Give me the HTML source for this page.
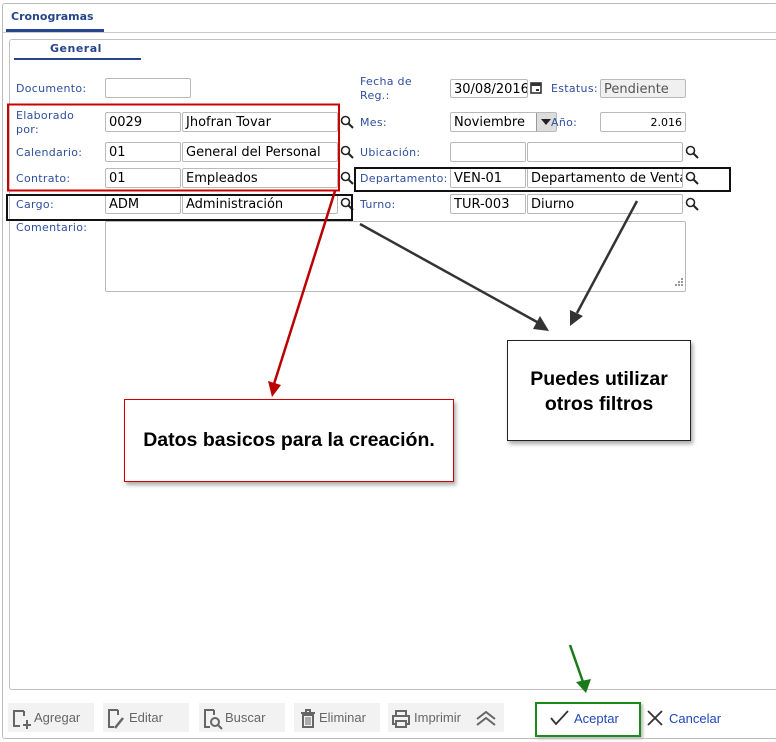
<!DOCTYPE html>
<html><head><meta charset="utf-8"><style>
*{box-sizing:border-box}
body{margin:0;width:776px;height:742px;background:#fff;position:relative;overflow:hidden;font-family:"DejaVu Sans","Liberation Sans",sans-serif}
.a{position:absolute}
.lbl{position:absolute;font-size:11px;color:#2e4f9c;line-height:14px;letter-spacing:.3px}
.in{position:absolute;border:1px solid #b9b9b9;border-radius:2px;height:20px;font-size:13px;line-height:20px;padding-left:3px;color:#000;background:#fff;white-space:nowrap;overflow:hidden}
.btn{position:absolute;top:703px;height:29px;background:#f2f2f2;font-family:"Liberation Sans",sans-serif;font-size:13px;color:#666;line-height:29px}
</style></head><body>
<div class="a" style="left:2px;top:3px;right:-2px;bottom:3px;border:1px solid #bcbcbc;border-radius:3px"></div>
<div class="a" style="left:11px;top:10px;font-size:11px;font-weight:bold;color:#27458c">Cronogramas</div>
<div class="a" style="left:6px;top:29px;width:98px;height:3px;background:#27458c"></div>
<div class="a" style="left:3px;top:32px;right:0;border-top:1px solid #c8c8c8"></div>
<div class="a" style="left:9px;top:39px;width:780px;height:651px;border:1px solid #c0c0c0;border-radius:3px"></div>
<div class="a" style="left:50px;top:42px;font-size:11px;font-weight:bold;color:#27458c;letter-spacing:.5px">General</div>
<div class="a" style="left:14px;top:58px;width:127px;height:2px;background:#27458c"></div>

<div class="lbl" style="left:16px;top:82px">Documento:</div>
<div class="in" style="left:105px;top:78px;width:86px"></div>
<div class="lbl" style="left:16px;top:109px">Elaborado<br>por:</div>
<div class="in" style="left:105px;top:112px;width:76px">0029</div>
<div class="in" style="left:182px;top:112px;width:156px">Jhofran Tovar</div>
<div class="lbl" style="left:16px;top:146px">Calendario:</div>
<div class="in" style="left:105px;top:142px;width:76px">01</div>
<div class="in" style="left:182px;top:142px;width:156px">General del Personal</div>
<div class="lbl" style="left:16px;top:172px">Contrato:</div>
<div class="in" style="left:105px;top:168px;width:76px">01</div>
<div class="in" style="left:182px;top:168px;width:156px">Empleados</div>
<div class="lbl" style="left:16px;top:198px">Cargo:</div>
<div class="in" style="left:105px;top:194px;width:76px">ADM</div>
<div class="in" style="left:182px;top:194px;width:156px">Administración</div>
<div class="lbl" style="left:16px;top:221px">Comentario:</div>
<div class="in" style="left:105px;top:221px;width:581px;height:71px"></div>

<div class="lbl" style="left:360px;top:75px">Fecha de<br>Reg.:</div>
<div class="in" style="left:450px;top:79px;width:78px;height:19px;line-height:19px">30/08/2016</div>
<svg class="a" style="left:530px;top:81px" width="12" height="13" viewBox="0 0 12 13"><rect x="1" y="2" width="10" height="10" fill="none" stroke="#333" stroke-width="1.6"/><rect x="1" y="2" width="10" height="3" fill="#333"/><rect x="6" y="8" width="3" height="2" fill="#333"/></svg>
<div class="lbl" style="left:551px;top:82px">Estatus:</div>
<div class="in" style="left:600px;top:79px;width:86px;height:19px;line-height:19px;background:#f0f0f0;color:#555">Pendiente</div>
<div class="lbl" style="left:360px;top:116px">Mes:</div>
<div class="in" style="left:450px;top:112px;width:107px">Noviembre</div>
<div class="a" style="left:536px;top:113px;width:20px;height:18px;background:#ddd;border-left:1px solid #999"></div>
<div class="a" style="left:541px;top:119px;width:0;height:0;border-left:5px solid transparent;border-right:5px solid transparent;border-top:6px solid #222"></div>
<div class="lbl" style="left:551px;top:116px">Año:</div>
<div class="in" style="left:600px;top:112px;width:86px;text-align:right;padding-right:3px;font-size:11px">2.016</div>
<div class="lbl" style="left:360px;top:146px">Ubicación:</div>
<div class="in" style="left:450px;top:142px;width:76px"></div>
<div class="in" style="left:527px;top:142px;width:156px"></div>
<div class="lbl" style="left:360px;top:172px">Departamento:</div>
<div class="in" style="left:450px;top:168px;width:76px">VEN-01</div>
<div class="in" style="left:527px;top:168px;width:156px">Departamento de Ventas</div>
<div class="lbl" style="left:360px;top:198px">Turno:</div>
<div class="in" style="left:450px;top:194px;width:76px">TUR-003</div>
<div class="in" style="left:527px;top:194px;width:156px">Diurno</div>

<svg class="a" style="left:0;top:0" width="776" height="742">
<defs><symbol id="lp" viewBox="0 0 14 14"><circle cx="5.5" cy="5.5" r="4" fill="none" stroke="#222" stroke-width="1.6"/><line x1="8.5" y1="8.5" x2="13" y2="13" stroke="#222" stroke-width="2"/></symbol></defs>
<use href="#lp" x="340" y="115" width="14" height="14"/>
<use href="#lp" x="340" y="145" width="14" height="14"/>
<use href="#lp" x="340" y="171" width="14" height="14"/>
<use href="#lp" x="340" y="197" width="14" height="14"/>
<use href="#lp" x="685" y="145" width="14" height="14"/>
<use href="#lp" x="685" y="171" width="14" height="14"/>
<use href="#lp" x="685" y="197" width="14" height="14"/>
<g fill="#999"><rect x="681" y="278" width="2" height="2"/><rect x="678" y="284" width="2" height="2"/><rect x="681" y="284" width="2" height="2"/><rect x="681" y="281" width="2" height="2"/><rect x="678" y="281" width="2" height="2"/><rect x="675" y="284" width="2" height="2"/></g>
<rect x="8" y="104.5" width="331" height="86" fill="none" stroke="#c00" stroke-width="2"/>
<rect x="7" y="195" width="345" height="25" fill="none" stroke="#111" stroke-width="2"/>
<rect x="355" y="168" width="375" height="23" fill="none" stroke="#111" stroke-width="2"/>
<line x1="335" y1="191" x2="274" y2="384" stroke="#b00" stroke-width="2.5"/>
<polygon points="268,381 281,385 272,397" fill="#b00"/>
<line x1="360" y1="224" x2="537" y2="322" stroke="#333" stroke-width="2.5"/>
<polygon points="533,329 540,316 549,331" fill="#333"/>
<line x1="637" y1="201" x2="577" y2="313" stroke="#333" stroke-width="2.5"/>
<polygon points="570,310 583,316 570,326" fill="#333"/>
<line x1="570" y1="645" x2="583" y2="682" stroke="#1a7a1a" stroke-width="2.5"/>
<polygon points="576,682 591,679 586,693" fill="#1a7a1a"/>
</svg>

<div class="a" style="left:124px;top:399px;width:330px;height:83px;border:1px solid #c00;background:#fff;box-shadow:2px 3px 4px #aaa;font-family:'Liberation Sans',sans-serif;font-weight:bold;font-size:19.5px;text-align:center;line-height:81px;white-space:nowrap">Datos basicos para la creación.</div>
<div class="a" style="left:507px;top:340px;width:184px;height:101px;border:1px solid #222;background:#fff;box-shadow:2px 3px 4px #aaa;font-family:'Liberation Sans',sans-serif;font-weight:bold;font-size:19.5px;text-align:center;padding-top:26px;line-height:25px">Puedes utilizar<br>otros filtros</div>

<div class="btn" style="left:8px;width:86px"><svg class="a" style="left:3px;top:5px" width="22" height="22"><path d="M13 3H3v15h6M13 3v5" fill="none" stroke="#666" stroke-width="2"/><path d="M16 12v9M12 17h8" stroke="#666" stroke-width="2"/></svg><span style="position:absolute;left:26px">Agregar</span></div>
<div class="btn" style="left:103px;width:86px"><svg class="a" style="left:3px;top:5px" width="22" height="22"><path d="M12 2H3v17h5M12 2v5" fill="none" stroke="#666" stroke-width="2"/><path d="M9 20l8-10" stroke="#666" stroke-width="2.5"/></svg><span style="position:absolute;left:26px">Editar</span></div>
<div class="btn" style="left:199px;width:86px"><svg class="a" style="left:3px;top:5px" width="22" height="22"><path d="M12 2H3v17h5M12 2v5" fill="none" stroke="#666" stroke-width="2"/><circle cx="13" cy="14" r="4" fill="none" stroke="#666" stroke-width="2"/><path d="M16 17l4 4" stroke="#666" stroke-width="2"/></svg><span style="position:absolute;left:26px">Buscar</span></div>
<div class="btn" style="left:294px;width:86px"><svg class="a" style="left:5px;top:5px" width="20" height="22"><path d="M2 5h14M7 5V2h4v3M4 7h10v12H4z" fill="none" stroke="#666" stroke-width="2"/><path d="M7 9v8M9 9v8M11 9v8" stroke="#666"/></svg><span style="position:absolute;left:25px">Eliminar</span></div>
<div class="btn" style="left:388px;width:116px"><svg class="a" style="left:3px;top:6px" width="20" height="20"><path d="M5 7V2h10v5M5 15H2V7h16v8h-3M5 12h10v6H5z" fill="none" stroke="#666" stroke-width="2"/></svg><span style="position:absolute;left:26px">Imprimir</span><svg class="a" style="left:87px;top:6px" width="22" height="18"><path d="M2 10l9-7 9 7M2 16l9-7 9 7" fill="none" stroke="#666" stroke-width="2"/></svg></div>
<div class="a" style="left:535px;top:702px;width:106px;height:35px;border:2px solid #1a8a1a;box-shadow:2px 2px 3px #bbb"></div>
<svg class="a" style="left:550px;top:710px" width="20" height="16"><path d="M1 8l5 6L18 1" fill="none" stroke="#333" stroke-width="1.8"/></svg>
<div class="a" style="left:574px;top:711px;font-family:'Liberation Sans',sans-serif;font-size:13px;color:#1f47b8">Aceptar</div>
<svg class="a" style="left:647px;top:710px" width="16" height="16"><path d="M1 1l14 14M15 1L1 15" stroke="#333" stroke-width="1.8"/></svg>
<div class="a" style="left:669px;top:711px;font-family:'Liberation Sans',sans-serif;font-size:13px;color:#1f47b8">Cancelar</div>
</body></html>
